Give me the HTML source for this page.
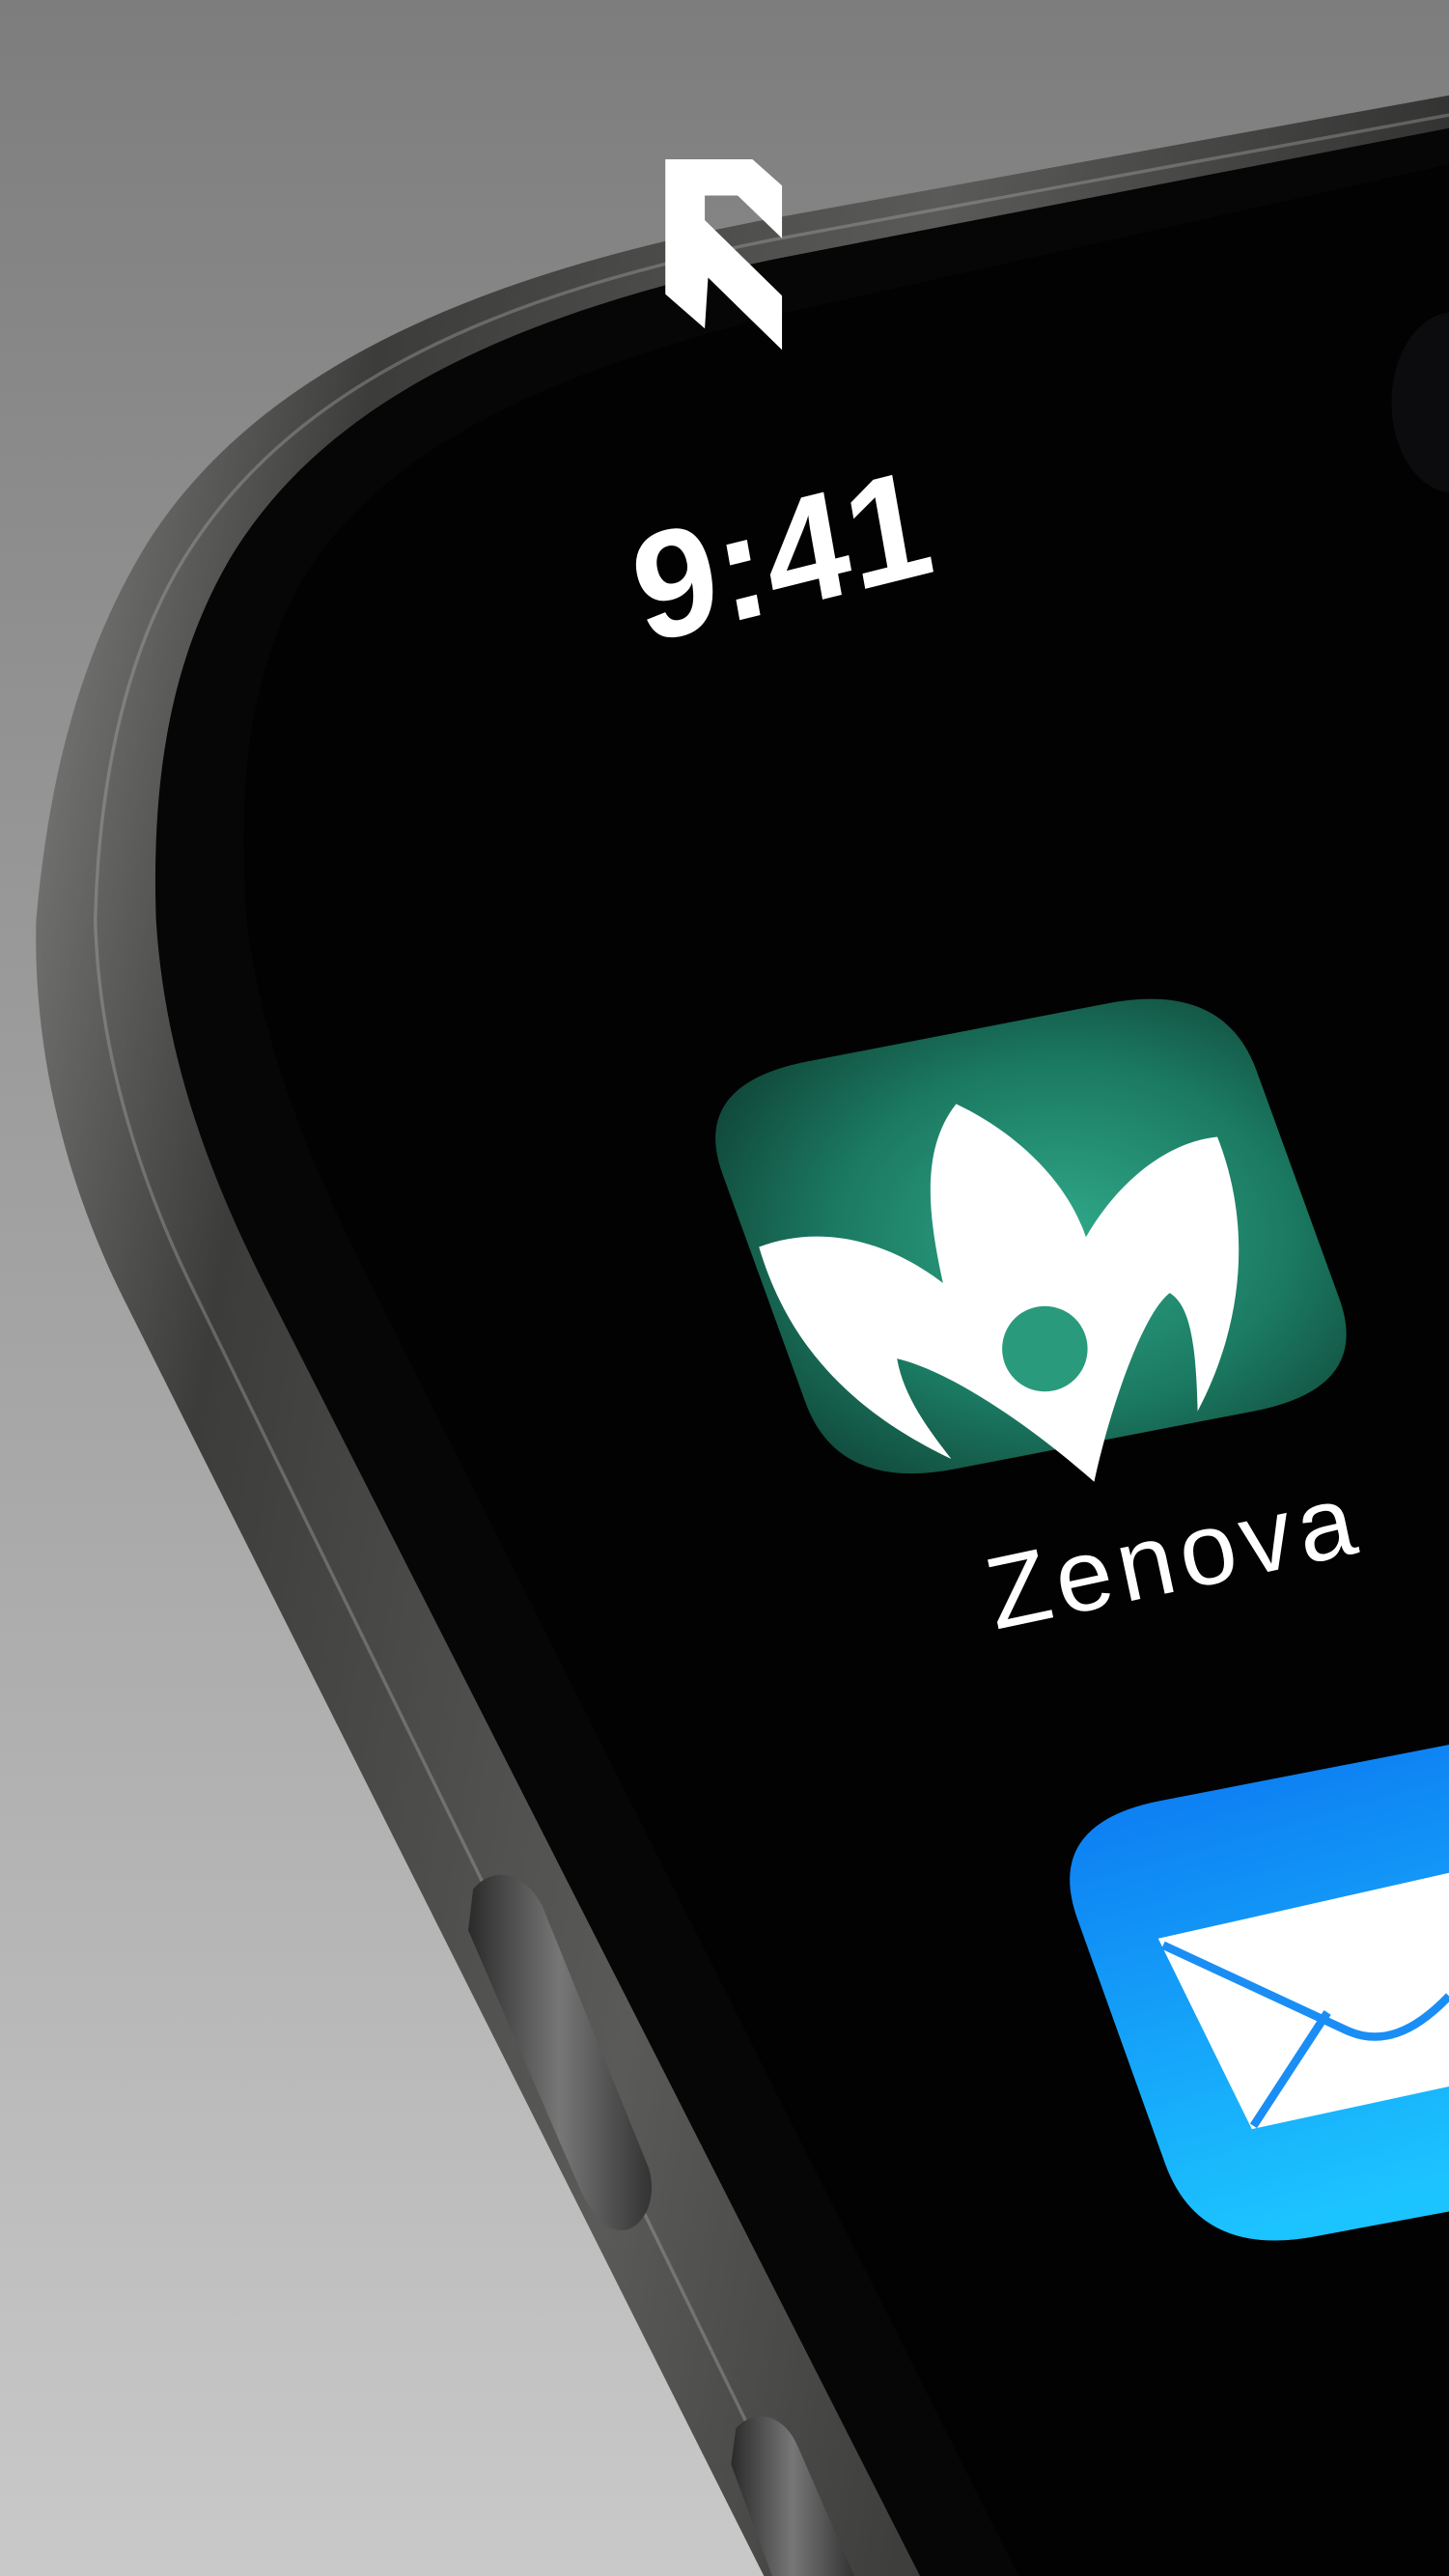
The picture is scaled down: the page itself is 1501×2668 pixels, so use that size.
<!DOCTYPE html>
<html><head><meta charset="utf-8"><style>
html,body{margin:0;padding:0;width:1501px;height:2668px;overflow:hidden;background:#999}
svg{display:block}
</style></head><body>
<svg width="1501" height="2668" viewBox="0 0 882 1568" preserveAspectRatio="none" xmlns="http://www.w3.org/2000/svg">
<defs>
<linearGradient id="bg" x1="0" y1="0" x2="0" y2="1"><stop offset="0" stop-color="#7d7d7d"/><stop offset="1" stop-color="#c9c9c9"/></linearGradient>
<linearGradient id="metal" x1="0" y1="0" x2="1" y2="0.3"><stop offset="0" stop-color="#8a8a88"/><stop offset="0.25" stop-color="#3c3c3b"/><stop offset="0.6" stop-color="#5a5a58"/><stop offset="1" stop-color="#2a2a2a"/></linearGradient>
<radialGradient id="green" cx="0.55" cy="0.5" r="0.6"><stop offset="0" stop-color="#30a889"/><stop offset="0.6" stop-color="#1b7a62"/><stop offset="1" stop-color="#114a3c"/></radialGradient>
<linearGradient id="blue" x1="0" y1="0" x2="0.3" y2="1"><stop offset="0" stop-color="#0a6ff0"/><stop offset="1" stop-color="#1cc4ff"/></linearGradient>
<linearGradient id="btn" x1="0" y1="0" x2="1" y2="0"><stop offset="0" stop-color="#2a2a2a"/><stop offset="0.5" stop-color="#777"/><stop offset="1" stop-color="#333"/></linearGradient>
</defs>
<rect width="882" height="1568" fill="url(#bg)"/>
<path d="M882 58 L470 133 C300 165 160 220 90 330 C50 395 30 470 22 560 C20 640 40 720 75 790 L465 1568 L882 1568 Z" fill="url(#metal)"/>
<path d="M882 70 L470 146 C310 178 180 230 112 340 C75 400 60 480 58 560 C60 640 85 720 120 790 L500 1568" fill="none" stroke="#b5b5b2" stroke-width="2" opacity="0.35"/>
<path d="M882 78 L470 158 C320 190 200 240 140 340 C105 400 92 470 95 560 C100 640 125 710 160 780 L560 1568 L882 1568 Z" fill="#060606"/>
<path d="M882 100 L480 190 C340 225 230 270 180 360 C150 420 145 480 150 560 C160 640 190 710 225 780 L620 1568 L882 1568 Z" fill="#020202"/>
<ellipse cx="885" cy="245" rx="38" ry="55" fill="#0c0c0e"/>
<path d="M288 1150 C300 1135 320 1140 330 1160 L395 1320 C402 1345 385 1365 370 1355 C362 1350 356 1340 352 1330 L285 1175 Z" fill="url(#btn)"/>
<path d="M448 1478 C460 1465 478 1470 486 1490 L520 1568 L470 1568 L445 1500 Z" fill="url(#btn)"/>
<polygon points="405,97 458,97 476,113 476,145 449,119 429,119 429,134 476,180 476,213 431,169 429,200 405,179" fill="#fff"/>
<text x="0" y="0" transform="translate(392,392) rotate(-14) skewX(-4)" font-family="Liberation Sans, sans-serif" font-weight="bold" font-size="92" fill="#fff">9:41</text>
<path d="M491.5 646.1 L673.5 610.9 Q745 597 764.8 651.6 L815.2 790.4 Q835 845 763.5 858.9 L581.5 894.1 Q510 908 490.2 853.4 L439.8 714.6 Q420 660 491.5 646.1 Z" fill="url(#green)"/>
<path d="M462 759 C500 745 540 755 574 781 C565 740 560 700 582 672 C620 690 650 720 661 753 C680 720 710 695 741 692 C760 740 760 800 729 859 C728 820 725 795 712 787 C695 800 675 860 666 902 C630 870 580 835 546 827 C550 850 565 870 579 888 C520 860 480 820 462 759 Z" fill="#fff"/>
<circle cx="636" cy="821" r="26" fill="#2a9a7c"/>
<text x="0" y="0" transform="translate(606,992) rotate(-12)" font-family="Liberation Sans, sans-serif" font-size="62" letter-spacing="4" fill="#fff">Zenova</text>
<path d="M706.5 1096.1 L990 1041 L990 1326 L801.5 1361.1 Q730 1375 709.1 1316.7 L655.9 1168.3 Q635 1110 706.5 1096.1 Z" fill="url(#blue)"/>
<path d="M705 1180 L882 1140 L882 1270 L762 1296 Z" fill="#fff"/>
<path d="M708 1184 L820 1236 C840 1245 860 1238 882 1215" fill="none" stroke="#1a8ef5" stroke-width="5"/>
<path d="M763 1294 L808 1225" stroke="#1a8ef5" stroke-width="5"/>
</svg>
</body></html>
